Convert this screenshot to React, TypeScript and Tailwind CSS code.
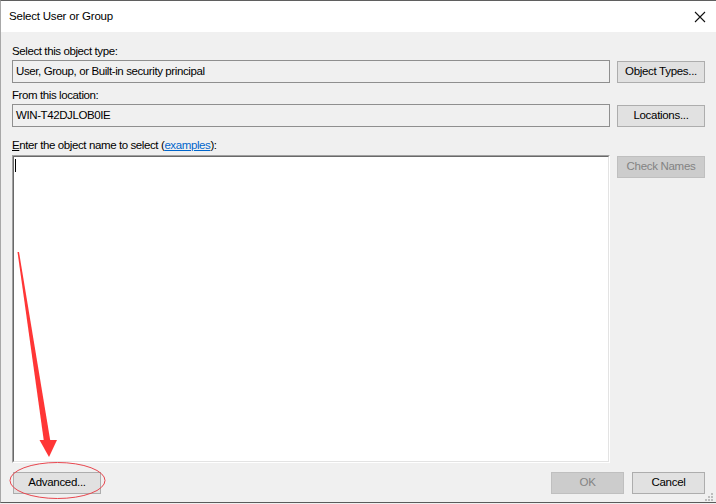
import React from "react";

const font = { fontFamily: '"Liberation Sans", Arial, sans-serif' };

function Btn({ children, disabled, w = "w-[88px]" }: { children: React.ReactNode; disabled?: boolean; w?: string }) {
  return (
    <div
      className={`${w} h-[22px] shrink-0 flex items-center justify-center text-[11.5px] tracking-[-0.3px] border ${
        disabled ? "bg-[#cccccc] border-[#bfbfbf] text-[#838383]" : "bg-[#e1e1e1] border-[#adadad] text-black"
      }`}
    >
      {children}
    </div>
  );
}

export default function App() {
  return (
    <div className="relative w-[716px] h-[504px] overflow-hidden bg-[#f0f0f0] text-black" style={font}>
      <div className="w-full h-[503px] flex flex-col border-t border-l border-b border-t-[#5f5f5f] border-l-[#a8a8a8] border-b-[#5a5a5a]">
        {/* title bar */}
        <div className="h-[31px] bg-white flex items-center justify-between pl-[8px] pr-[9px] shrink-0">
          <span className="text-[11.5px] tracking-[-0.2px] leading-[15px]">Select User or Group</span>
          <svg width="12" height="12" viewBox="0 0 12 12" className="mr-[1px]">
            <path d="M1 1 L11 11 M11 1 L1 11" stroke="#111" strokeWidth="1.1" />
          </svg>
        </div>
        {/* body */}
        <div className="flex-1 flex flex-col pl-[11px] pr-[11px] text-[11.5px] tracking-[-0.4px]">
          <div className="mt-[12px] leading-[15px] h-[15px]">Select this object type:</div>
          <div className="mt-[1px] flex items-start gap-[7px]">
            <div className="flex-1 h-[23px] border border-[#8f8f8f] bg-[#f0f0f0] flex items-center pl-[3px]">
              User, Group, or Built-in security principal
            </div>
            <div className="mt-[1px]">
              <Btn>Object Types...</Btn>
            </div>
          </div>
          <div className="mt-[5px] leading-[15px] h-[15px]">From this location:</div>
          <div className="mt-[1px] flex items-start gap-[7px]">
            <div className="flex-1 h-[23px] border border-[#8f8f8f] bg-[#f0f0f0] flex items-center pl-[3px]">
              WIN-T42DJLOB0IE
            </div>
            <div className="mt-[1px]">
              <Btn>Locations...</Btn>
            </div>
          </div>
          <div className="mt-[11px] leading-[15px] h-[15px]">
            <span className="underline">E</span>nter the object name to select (
            <span className="text-[#0066cc] underline">examples</span>):
          </div>
          <div className="mt-[2px] flex items-start gap-[7px]">
            <div className="flex-1 h-[308px] border-t border-l border-r border-b border-t-[#a0a0a0] border-l-[#a0a0a0] border-r-white border-b-white">
              <div className="h-full border-t border-l border-r border-b border-t-[#696969] border-l-[#696969] border-r-[#e3e3e3] border-b-[#e3e3e3] bg-white pl-[1px] pt-[2px]">
                <div className="w-[1px] h-[13px] bg-black" />
              </div>
            </div>
            <div className="mt-[1px]">
              <Btn disabled>Check Names</Btn>
            </div>
          </div>
          <div className="mt-[9px] flex items-center pl-[1px]">
            <Btn>Advanced...</Btn>
            <div className="flex-1" />
            <Btn disabled w="w-[73px]">OK</Btn>
            <div className="w-[8px]" />
            <Btn w="w-[73px]">Cancel</Btn>
          </div>
        </div>
      </div>
      {/* size grip */}
      <svg className="absolute left-[703px] top-[492px]" width="12" height="10" viewBox="0 0 12 10">
        <rect x="8" y="1" width="2" height="2" fill="#bdbdbd" />
        <rect x="5" y="4" width="2" height="2" fill="#bdbdbd" />
        <rect x="8" y="4" width="2" height="2" fill="#bdbdbd" />
        <rect x="2" y="7" width="2" height="2" fill="#bdbdbd" />
        <rect x="5" y="7" width="2" height="2" fill="#bdbdbd" />
        <rect x="8" y="7" width="2" height="2" fill="#bdbdbd" />
      </svg>
      {/* annotation */}
      <svg className="absolute left-0 top-0 pointer-events-none" width="716" height="504" viewBox="0 0 716 504">
        <polygon points="17.5,252 19,252 50.5,442 44,442" fill="#ff3636" />
        <polygon points="39.5,440 57,440 49,457" fill="#ff3636" />
        <ellipse cx="57.5" cy="480.5" rx="47.5" ry="18" fill="none" stroke="#e8474f" strokeWidth="1" />
      </svg>
    </div>
  );
}
